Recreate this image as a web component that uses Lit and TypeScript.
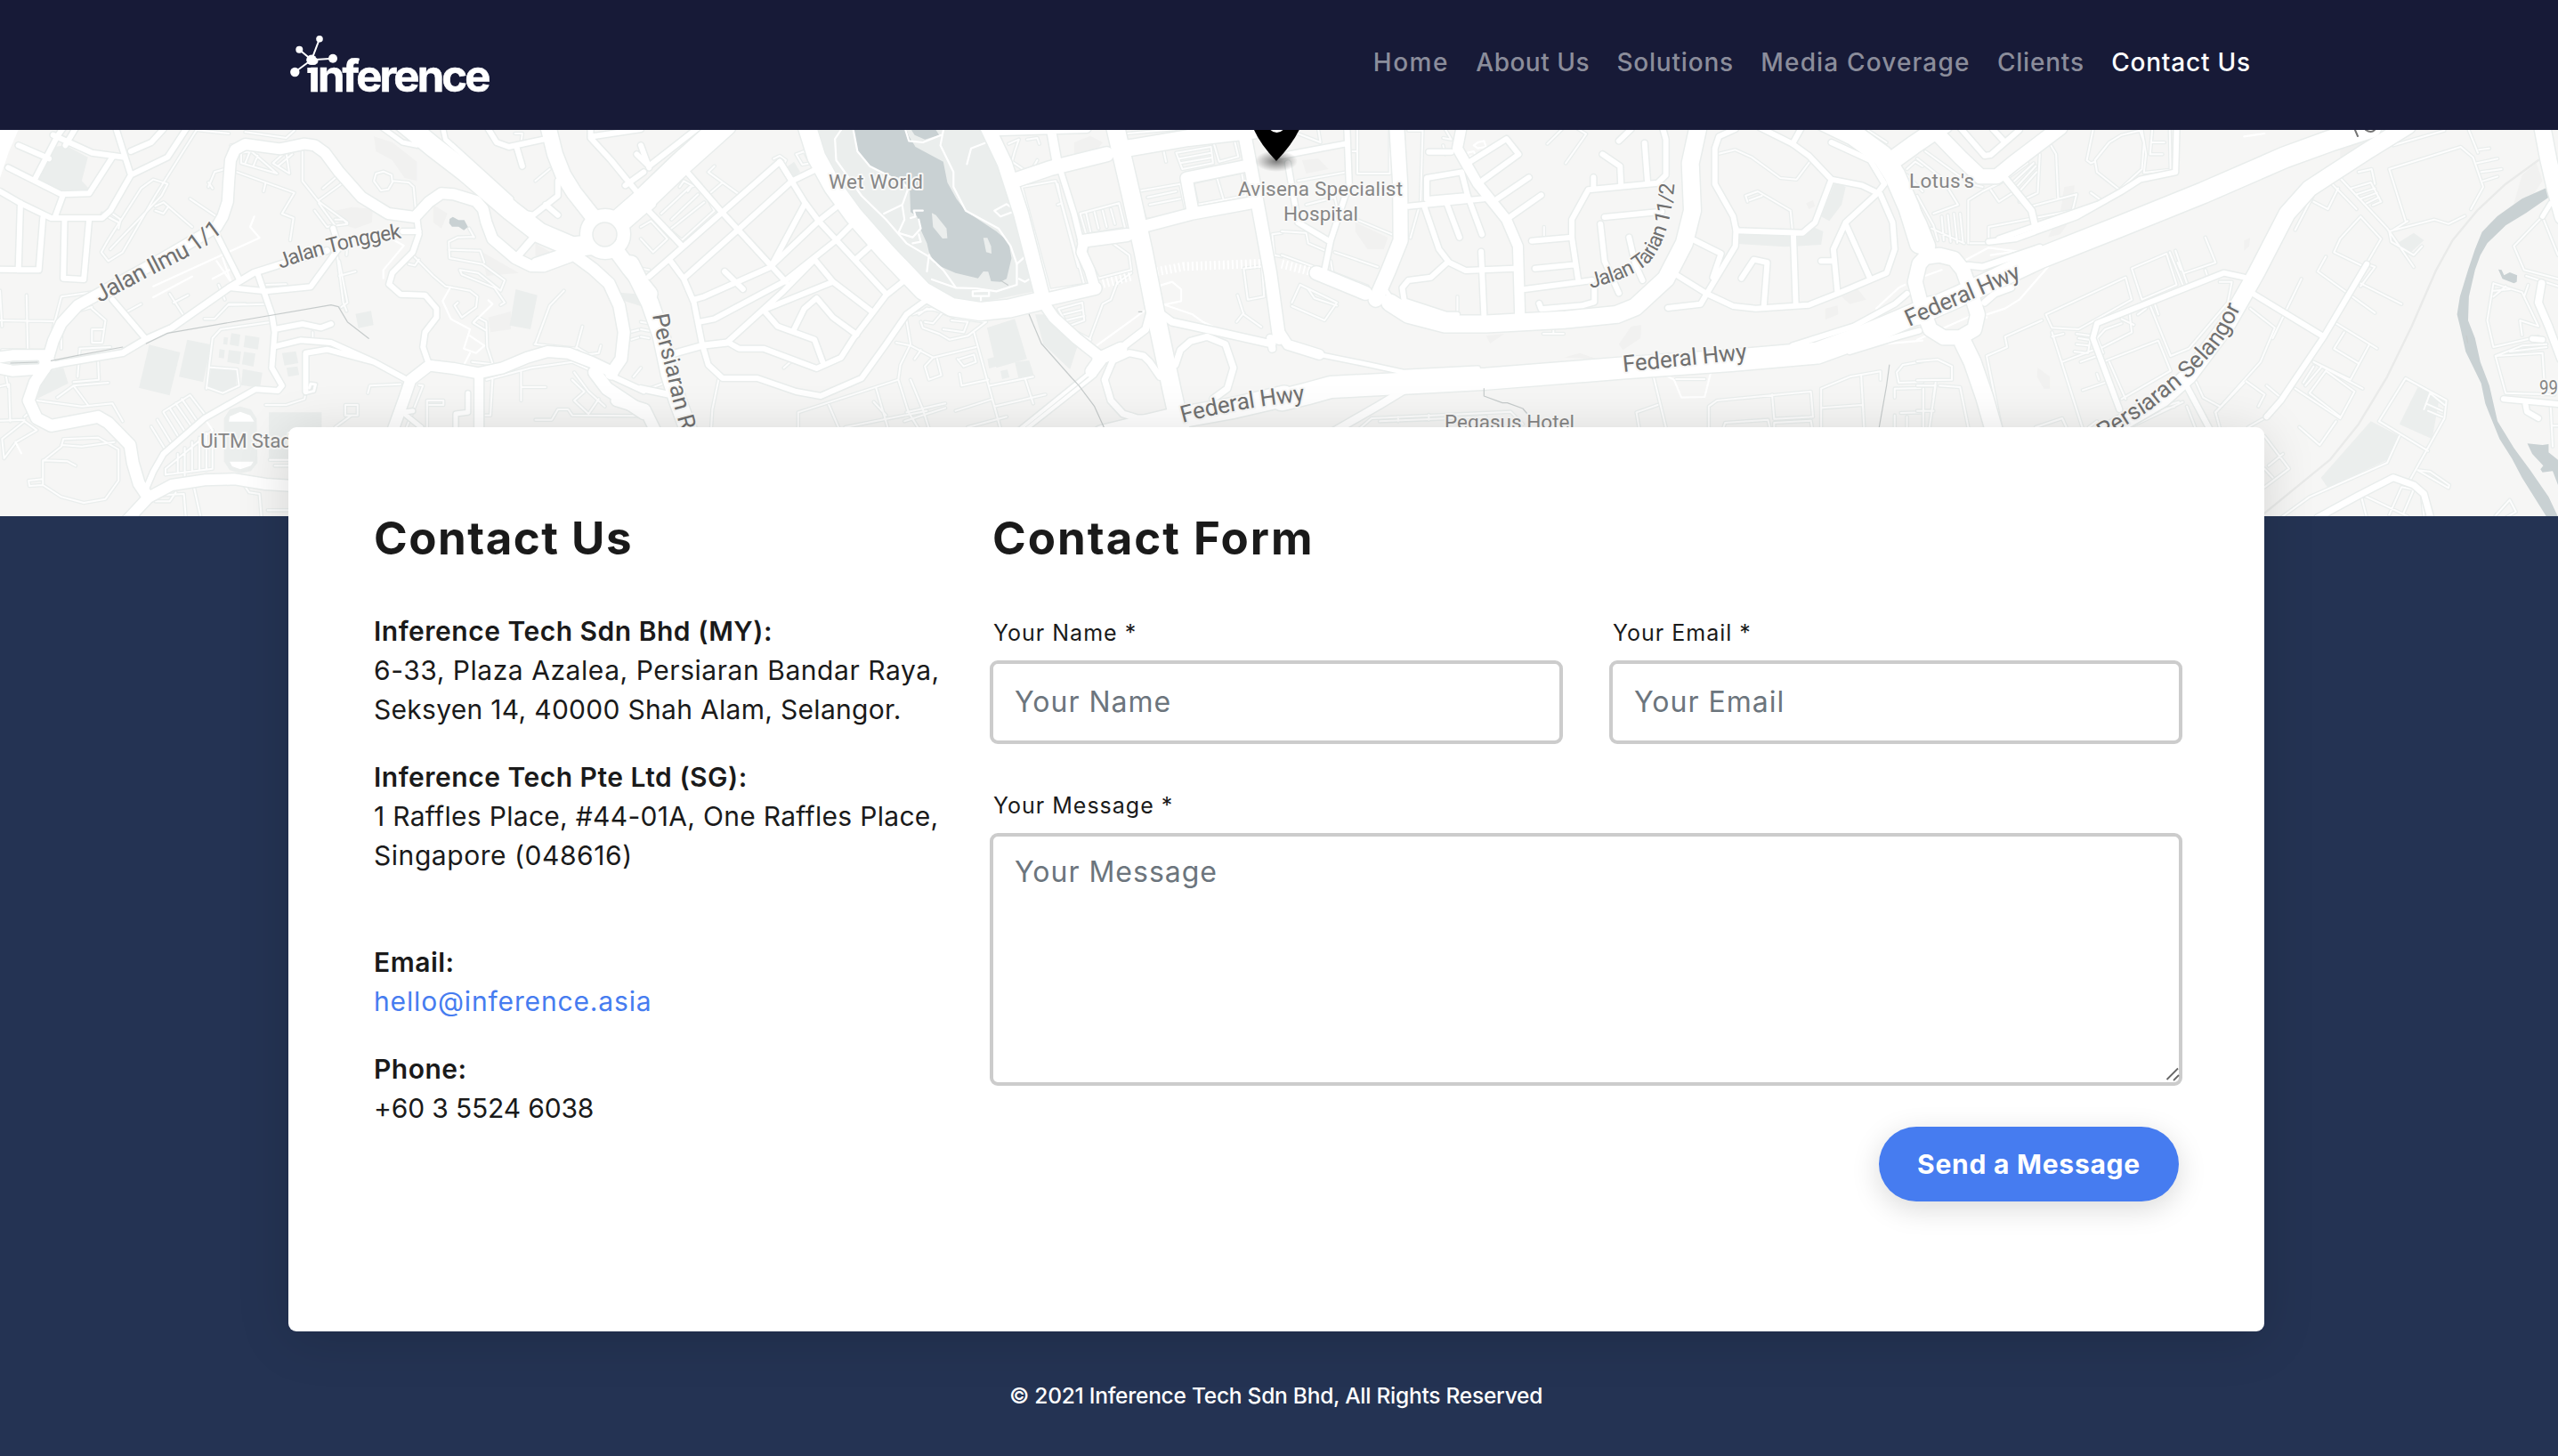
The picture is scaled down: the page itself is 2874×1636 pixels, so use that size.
import { LitElement, html, css, svg } from "lit";
import { customElement } from "lit/decorators.js";

type Road = [number, string];

interface Sheet {
  x: number;
  areas: string[];
  shade: string[];
  water: string[];
  islands: string[];
  lines: string[];
  paths: string[];
  roads: Road[];
  lanes: string[];
}

/* The map is drawn in four sheets, each on its own 1568 x 1350 grid. */
const SHEETS: Sheet[] = [
  {
    x: 0,
    areas: [
      "M130,75 160,70 215,110 200,190 220,220 150,235 90,185Z",
      "M365,742 441,768 415,913 340,887Z",
      "M458,725 517,742 497,868 438,850Z",
      "M1262,555 1315,575 1298,690 1247,677Z",
      "M870,638 908,628 914,676 877,686Z",
      "M658,970 787,970 787,1130 658,1130Z",
      "M90,925 110,835 155,820 167,872Z",
      "M548,990 562,960 588,950 614,960 628,990 630,1140 614,1168 588,1175 562,1165 548,1135Z",
      "M566,703 588,708 584,748 562,742Z",
      "M600,710 635,718 631,758 596,750Z",
      "M560,760 590,765 586,808 556,800Z",
      "M597,766 625,772 620,816 592,808Z",
      "M594,824 642,836 636,888 590,878Z",
      "M517,818 578,828 578,885 545,900 508,885Z",
      "M548,716 558,718 556,742 546,740Z",
      "M537,757 550,760 548,788 535,785Z",
      "M690,770 724,764 730,804 696,812Z",
      "M701,820 728,815 732,844 705,850Z",
      "M1516,566 1568,572 1568,612 1518,590Z",
    ],
    shade: [
      "M915,40 960,60 1020,125 1020,190 990,180 960,120 920,90Z",
      "M820,290 860,278 912,284 910,330 870,350 830,335Z",
      "M1180,430 1270,500 1190,510Z",
      "M1060,270 1095,300 1080,350 1060,330Z",
      "M1310,400 1360,440 1310,455Z",
      "M1195,650 1250,630 1250,690 1200,700Z",
    ],
    water: ["M1100,318 1108,311 1122,322 1136,322 1145,345 1135,356 1122,344 1106,344 1099,332Z"],
    islands: [
      "M0,18 45,18 22,90 0,180Z",
      "M560,1001 562,984 588,968 612,980 622,1001Z",
      "M562,1136 620,1136 614,1150 588,1162 568,1152Z",
    ],
    lines: ["M125,796 190,778 300,750", "M358,738 410,703 810,608 828,614 850,665 902,721"],
    paths: [
      "M375,582 470,512M375,545 635,382 612,345 622,310",
      "M965,390 988,408 938,490 938,518",
      "M530,460 570,540M545,450 565,530M520,520 575,480",
      "M1102,548 1083,595 1103,655 1150,690 1135,755 1165,770 1185,745 1150,712M1150,770 1135,810M1160,665 1205,605 1195,592",
      "M38,1070 52,1108",
      "M500,990 520,1030",
    ],
    roads: [
      [13, "M120,800 105,830 85,870 70,930 90,990 125,1015 240,985 265,1005 318,1080 325,1140 340,1210 362,1255"],
      [12, "M310,1335 362,1258 420,1215 500,1198 575,1195 650,1212 720,1218"],
      [12, "M115,800 130,730 150,670 190,610 240,572 400,450 530,345 545,310 557,260 560,190 564,120 575,85 600,66 685,82 745,65 770,70 795,95 830,160 885,245 950,300 1015,312 1050,260 1080,232 1110,235 1165,258 1182,285 1190,330 1205,385 1260,450 1300,477 1330,478 1395,445"],
      [12, "M-5,785 30,778 110,778"],
      [12, "M-5,820 30,830 110,822"],
      [9, "M100,778 100,825"],
      [22, "M985,-10 1060,75 1140,160 1250,290 1320,365 1400,412 1450,405"],
      [5, "M935,10 985,60 1020,70M1085,20 1090,50 1250,250"],
      [17, "M1340,0 1358,100 1378,170 1405,230 1445,300 1465,330"],
      [13, "M1395,430 1450,485 1490,535 1515,610 1527,700 1520,790 1495,840"],
      [17, "M1505,420 1540,485 1590,570"],
      [24, "M1500,340 1568,265"],
      [8, "M1262,450 1303,385M1310,462 1375,432"],
      [12, "M960,1035 990,920 1005,860 1050,812 1110,822 1170,838 1230,820 1290,785 1340,765 1390,770 1450,802 1500,835"],
      [10, "M1172,838 1172,1025"],
      [14, "M1455,835 1485,890 1575,972"],
      [6, "M1500,850 1575,898"],
      [6, "M1050,810 1035,750 1040,700 1068,650 1068,620 1040,575 980,572 952,538 960,500 1010,430 1025,370 1020,315M985,360 1025,360"],
      [6, "M0,225 50,265 125,315 250,315 270,290 320,170 285,18M320,170 410,110 460,5M320,90 370,60 400,15"],
      [6, "M45,70 120,115M20,145 85,190 150,235 218,232 275,110M85,185 140,40 155,10M130,35 225,95 305,110M190,0 160,70"],
      [6, "M155,235 135,310M50,265 45,490M105,315 95,490 0,488M158,320 155,518 205,522 218,320"],
      [6, "M275,590 355,720M530,370 585,520M565,550 650,562 760,547 830,415 815,350"],
      [7, "M110,818 150,805 300,770 355,725 420,685 560,550 620,500 700,465 800,425"],
      [6, "M630,500 665,640 672,700 665,820 690,880 680,897 625,892 500,990 400,1110 375,1170 355,1235"],
      [6, "M672,690 740,672 785,685 810,672M672,748 735,727 810,735 915,800 995,860M748,900 748,770 800,758 915,800"],
      [3, "M748,905 768,898 772,876 760,874 757,888"],
      [6, "M1195,15 1215,60 1245,75 1330,50M1265,80 1278,140M1365,190 1365,240 1305,305 1285,300M1335,270 1365,305"],
      [6, "M1445,15 1445,45 1495,120 1560,230M1450,40 1568,15M1530,205 1575,160"],
      [5, "M1115,1020 1115,975 1145,970 1145,905M1010,965 985,970 1030,1020"],
    ],
    lanes: [
      "M480,20 380,240 300,430 265,460 248,430 262,395 345,215 375,185 410,200 395,240 270,420",
      "M380,275 400,262 470,345M380,290 400,300 410,280M465,250 530,310M265,290 295,320 290,350M250,300 290,330",
      "M580,160 720,230 690,300 718,315 710,390M650,195 645,225",
      "M740,80 740,190 780,260 850,330 M780,255 840,195M790,215 820,180M770,290 800,345 820,340 780,265",
      "M510,210 525,160 550,150M510,195 520,215M590,95 615,90 678,165 590,130 590,95M610,95 600,130M630,105 620,140M668,130 700,90 708,165 668,130M680,140 715,100M565,70 640,60",
      "M915,190 920,165 938,158 958,170 960,195 950,218 932,222 915,190M960,190 1000,195 1012,210 1018,300",
      "M820,320 840,320 850,335 825,340M825,440 840,600 848,628M830,510 870,495M830,460 850,600 835,615M850,400 848,440",
      "M1010,440 1060,510 1090,545 1150,560 1168,580 1165,615 1130,650 1112,610 1120,600M1000,470 1015,475 1025,455",
      "M1160,378 1120,380 1098,395 1100,450 1180,470 1235,525 1225,560 1170,500 1125,490 1130,505 1210,550 1235,600 1225,608M1098,422 1175,425 1185,465M1148,350 1160,380",
      "M1158,668 1170,650 1190,665 1192,750 1205,805M1158,668 1190,695M1155,800 1205,808",
      "M1310,740 1345,610 1380,560M1308,740 1410,755 1425,680M1410,750 1440,775 1465,770 1470,745",
      "M505,890 520,720 540,690 665,665M515,818 580,825 585,880 545,905 505,885M600,605 560,605 525,655 500,655M560,608 650,605M650,540 700,538M415,570 450,645M425,600 460,575M305,635 345,605M535,540 550,590",
      "M0,660 130,663M65,575 68,765M0,560 5,680M5,760 130,762M130,685 150,580 250,560M150,755 150,700M225,620 258,660 250,735 225,735 225,690 255,690M160,640 225,615M195,760 190,850M240,800 242,860 180,868M195,755 270,750",
      "M0,882 22,875 25,1000M0,998 60,995M15,850 20,885M140,920 180,880 265,870M180,880 215,945M60,985 80,960M90,930 200,950 275,940 300,1000M5,1060 60,1000 90,1030 40,1070 10,1125 5,1060",
      "M370,1018 402,1090M385,995 420,1075M400,970 440,1060M415,955 455,1040M430,940 470,1020M445,925 485,1005M400,968 465,912 500,975",
      "M405,1160 520,1030 520,1160 405,1180 405,1160M435,1110 435,1175M452,1090 452,1195M470,1070 470,1170M488,1055 488,1165M505,1040 505,1165",
      "M105,1135 150,1085 155,1060 240,1055 290,1095 290,1200 258,1262 205,1275 150,1255 105,1215 105,1135 M105,1132 165,1135 185,1150M150,1080 200,1085 280,1070M105,1195 70,1200 72,1218 105,1215",
      "M345,1295 380,1250 450,1245 455,1330M380,1270 415,1270 430,1240M475,1225 492,1330M600,1220 610,1240 635,1245 640,1330M655,1300 710,1300M660,1130 710,1130M672,1150 710,1150",
      "M820,1020 860,980M845,945 875,945 875,980 845,980 845,945M650,945 700,945 745,925 748,905",
      "M995,1020 1035,880 1025,878M1045,1020 1045,930 1085,930 1085,945 1050,945M900,905 905,880 980,875M765,700 765,725",
      "M1275,830 1275,930M1275,885 1335,885M1190,860 1300,820 1400,800 1440,825M1205,860 1200,980 1185,980",
      "M1310,995 1350,995 1365,960 1390,960 1400,980 1568,982M1405,835 1440,900 1480,950M1400,860 1430,900 1405,930 1440,975 1465,925",
      "M1260,30 1278,30 1275,60M1310,190 1345,150M1540,700 1568,690M1545,725 1568,715M1550,850 1568,820M600,25 700,45 720,20M480,18 560,30",
    ],
  },
  {
    x: 720,
    areas: [
      "M430,18 840,18 900,190 970,560 830,600 760,590 700,530 600,410 480,220Z",
      "M965,640 1000,640 1070,740 1050,825 985,740Z",
      "M847,685 915,655 945,790 870,820Z",
      "M915,800 950,795 962,845 925,860Z",
      "M848,790 865,783 870,815 852,822Z",
      "M880,830 897,826 902,852 884,858Z",
      "M350,150 375,125 390,160 365,185Z",
    ],
    shade: ["M1060,60 1100,38 1130,60 1110,95 1060,105Z"],
    water: [
      "M520,18 650,18 656,40 672,75 740,125 750,195 772,250 795,292 870,360 900,395 907,450 895,520 880,530 857,528 850,496 838,495 825,518 770,500 720,470 705,430 700,400 685,355 676,310 660,295 658,215 635,180 600,170 560,140 530,90Z",
      "M662,18 722,18 730,35 695,50 670,35Z",
    ],
    islands: ["M712,298 722,305 748,350 750,383 738,384 715,345Z", "M838,382 848,382 857,410 858,435 845,430Z"],
    lines: ["M950,640 980,738 1055,855 1072,880 1110,950 1133,1020", "M880,525 898,541", "M1218,631 1226,631"],
    paths: [
      "M490,18 475,48 478,120 540,240 600,320 650,400 705,445 740,490 770,548",
      "M520,18 530,90 560,140 600,168 655,212 640,270 595,300M648,20 656,55 690,60 735,35M740,20 733,70 765,160 765,210 795,290 875,350 905,410 920,470 920,540 870,562 820,552 770,550 712,522",
      "M798,133 808,80 842,62M690,290 668,290 672,310 660,315M640,275 645,320 630,365 665,380 685,350 680,320M665,400 685,395 680,370M700,495 705,440M920,470 940,445 960,450M925,520 940,530 958,515M812,562 852,560 852,578 812,578 812,562M832,578 832,600",
      "M865,290 895,268 918,290 880,310 865,290",
      "M1115,745 1240,620M1265,545 1300,530 1322,555 1322,595 1280,607 1350,640 1375,665 1450,710",
    ],
    roads: [
      [26, "M-90,370 0,262 100,130 205,0"],
      [6, "M-10,100 20,140 150,0M0,70 20,145M18,285 30,270"],
      [19, "M-25,470 22,600 50,710 70,840 90,930 118,1035"],
      [7, "M0,890 70,910M80,772 150,745 212,735"],
      [12, "M-60,930 10,960 35,1030"],
      [20, "M405,0 430,110 470,210 520,305 600,430 690,560 760,615 830,630 900,620 985,592"],
      [14, "M985,592 1112,552"],
      [11, "M1112,555 1098,490 1078,430 1084,392"],
      [14, "M1084,392 1190,372"],
      [16, "M845,0 890,130 930,300 985,592"],
      [12, "M985,600 1010,650 1065,720 1125,785"],
      [8, "M1125,785 1180,748 1235,690 1245,640"],
      [14, "M1128,785 1103,832M1120,790 1175,755"],
      [4, "M1095,840 920,1035M1110,845 1050,910 935,1035"],
      [20, "M1158,-10 1200,240 1230,430 1260,640 1300,900 1322,1035"],
      [16, "M910,190 1000,148 1140,100"],
      [18, "M1190,80 1340,45 1500,20"],
      [10, "M865,22 1090,12M1003,10 1020,140"],
      [6, "M1028,160 1060,300M1060,300 1078,400"],
      [13, "M1225,345 1350,300 1500,262M1350,290 1335,180 1485,138"],
      [14, "M1472,-5 1500,200 1540,500 1562,720"],
      [8, "M1275,640 1300,665 1400,695 1545,740M1540,720 1545,755"],
      [7, "M1270,850 1245,800 1230,780 1195,770 1155,795 1135,860 1150,930 1180,975 1215,990 1280,990M1308,810 1320,760 1345,730 1385,715 1430,740 1450,820 1435,890 1400,925"],
      [23, "M1130,1048 1300,992 1450,955 1575,915"],
      [6, "M20,512 70,452 340,125 370,190 430,150M70,455 105,520 130,600 150,740 165,810 200,855 285,855 380,900 440,915 540,855 600,740 650,640 700,590"],
      [6, "M15,285 100,408M105,518 240,352 370,190M130,590 155,580 318,480 402,265M145,665 180,655 350,530 478,390 525,325M318,478 435,325 490,265M212,733 350,560 425,455"],
      [6, "M110,155 195,290 275,410 355,530M340,125 400,260 435,325 600,570M425,455 470,530 565,630M205,495 250,555M525,455 570,400M470,530 300,625"],
      [6, "M300,625 335,680 425,725 445,800M375,690 400,620 430,585 470,650 528,708"],
      [6, "M212,733 240,755 300,755 430,822 490,785 520,720 570,630 600,575 650,520"],
    ],
    lanes: [
      "M50,300 120,210 145,200 180,290 100,390 70,355 155,262M75,320 140,235M95,210 105,190 125,205 115,225M180,140 165,160 240,235M170,230 200,195M325,115 340,105 355,120 345,145M380,100 400,90 415,130 395,135 380,100M0,345 25,325 65,385 30,430 0,385",
      "M190,860 175,960 172,1025M385,1025 385,970 630,860 635,810 660,740 650,660M460,945 485,1025M575,885 605,1025M630,860 655,970 680,1025M660,860 690,960 705,1025M570,935 600,980M650,970 745,940M645,1000 745,955M500,1020 700,965",
      "M625,735 660,745 715,785 820,750M685,760 670,790M715,785 695,815 705,860 735,845 725,790M815,700 880,1025M855,880 960,850M865,950 990,910M940,855 960,940M780,790 815,775 820,800 790,815 775,790M780,840 785,880 850,860M770,965 860,925M800,1020 895,985M350,820 370,795",
      "M665,640 710,620 770,650 845,665 800,712 755,725 730,705 690,685 685,665M680,640 700,620 740,630 715,670 695,665M760,660 800,665 790,700 740,690",
      "M1095,735 1130,605 1150,590 1165,535 1200,500M932,210 1015,190 1085,540 1000,558 932,210M1020,200 1030,270 1070,480",
      "M1075,300 1170,265 1185,350 1090,372 1075,300M1090,300 1100,360M1110,295 1120,350M1130,290 1140,345M1150,285 1160,335M1215,225 1320,200 1335,300 1235,322 1215,225M1240,245 1310,225M1245,270 1320,250",
      "M1350,195 1470,160 1480,240 1362,270 1350,195M1410,180 1425,250M1310,95 1395,75 1400,130 1325,150 1310,95M1318,115 1395,95M1320,130 1395,112M1400,55 1450,40 1462,108 1415,125 1400,55M1190,30 1310,15M1278,80 1285,125",
      "M1092,405 1150,395 1195,440 1200,490 1120,518 1090,440 1092,405M1475,485 1520,478 1525,580 1485,590 1475,485M1460,575 1475,640 1518,682M1475,635 1458,665M1545,370 1568,365M1545,370 1550,440 1568,445",
      "M900,65 925,50 915,90 908,125 940,155 960,145 970,120M945,50 970,45 975,65M1022,622 1080,600 1085,660 1045,680 1022,622M1035,640 1080,625M1040,660 1085,645M1040,680 1100,725M1020,270 1030,265",
      "M0,665 20,670M0,690 20,695M0,715 20,720M20,890 60,870M0,485 20,490",
    ],
  },
  {
    x: 1440,
    areas: [
      "M1355,190 1380,210 1370,270 1340,325 1320,310 1340,240Z",
      "M1112,368 1180,372 1300,345 1325,360 1320,405 1230,412 1115,402Z",
      "M1385,18 1440,18 1430,45Z",
    ],
    shade: [
      "M180,330 260,380 250,420 210,420 180,360Z",
      "M50,120 90,115 115,150 60,165Z",
      "M855,680 880,676 878,720 835,760 825,740Z",
      "M690,785 730,770 770,790Z",
      "M1330,620 1360,610 1362,640 1330,658Z",
      "M500,712 545,705 510,738Z",
      "M1370,580 1410,555 1430,590 1390,605Z",
      "M1283,265 1300,255 1305,275 1290,285Z",
    ],
    water: [],
    islands: [],
    lines: ["M495,890 495,915 540,938 552,938 590,957 601,975", "M1487,810 1480,880 1462,1020"],
    paths: [
      "M455,95 470,90 475,105 455,108 455,95M480,60 495,55 500,75 480,80 470,70 480,60",
      "M1455,620 1510,550 1525,540M1405,665 1460,635 1530,580",
      "M1470,740 1568,728",
      "M940,845 960,860 978,920 1035,918 1050,835",
    ],
    roads: [
      [16, "M281,-5 290,200 291,390 262,490 230,590"],
      [15, "M85,500 205,568"],
      [19, "M265,600 310,640 400,672 500,672 690,658 820,640 865,615 940,520 985,400 1005,290 1000,130 1022,-10"],
      [5, "M255,560 270,590 400,640M365,640 430,640"],
      [11, "M440,10 430,80 480,200 550,320 578,410 583,645"],
      [6, "M360,92 415,92M455,130 550,48 580,100 488,192M528,250 605,178M558,312 635,238M355,250 355,180 440,160 455,240 355,252M310,275 495,250M488,428 495,640"],
      [6, "M350,280 385,420 410,465 450,492 570,485M405,465 365,515 310,525 295,550 300,595 400,640M405,270 435,380M455,240 490,370"],
      [6, "M595,555 760,525M725,520 710,380 710,320 750,220 920,197 940,170 940,50 930,0M612,392 710,380M620,485 720,472M763,178 763,212"],
      [6, "M785,100 828,140 830,200M888,62 895,190M790,312 930,293M780,335 790,460 825,568M850,380 865,470 883,525M765,550 765,598 735,610 635,622 630,603"],
      [6, "M945,618 1025,605 1040,570 1110,410 1112,350M1010,390 1075,435 1055,515M970,510 1040,570 1105,612 1160,620 1290,608 1360,570 1480,500 1500,420 1495,330 1465,235 1420,205 1345,185 1290,105 1250,65 1170,10"],
      [6, "M1110,15 1070,40 1060,80 1060,200 1105,310 1112,358 1275,365 1305,330 1345,185M1252,370 1258,608M1125,518 1155,455 1188,465 1180,608M1475,200 1455,235 1380,330 1350,420 1360,568M1380,335 1440,520M1320,460 1350,460M1250,65 1270,15M825,55 855,15M1475,200 1440,120 1345,60"],
      [6, "M0,105 155,65M160,20 165,200 120,390 105,490M15,130 40,330 115,392"],
      [11, "M-5,700 15,742 92,775"],
      [5, "M92,775 210,808 300,835 480,822"],
      [24, "M0,928 60,908 120,885 300,872 500,857 840,820 1100,795 1310,770 1400,725 1480,680 1590,615"],
      [8, "M120,1040 240,945 300,895 400,885"],
      [6, "M1250,745 1400,680 1500,605 1530,570M1390,765 1500,718 1560,695"],
      [23, "M1325,-15 1400,35 1470,105 1500,170 1535,280 1562,400"],
      [20, "M1490,125 1545,70 1620,0"],
    ],
    lanes: [
      "M650,65 690,10M720,10 745,32 695,130M1065,100 1110,85 1150,110 1220,180 1260,185 1295,120M1140,260 1135,240 1165,225 1245,290 1250,360M1145,255 1175,240M185,20 185,165 265,165 265,20M310,20 345,20 340,260 315,382M430,580 430,640M170,90 185,90",
      "M640,705 690,705M665,690 665,705M642,345 642,385M25,600 45,540 135,600 105,660 25,612M65,555 80,585 135,610M130,430 235,480M40,190 160,160M165,310 270,370M60,270 130,245 140,310M20,20 95,60 90,20M0,440 80,480M0,360 60,365 65,400 115,430M120,460 125,500 210,545",
      "M910,850 940,1020M875,1025 868,970 920,945M965,858 1035,858M1045,1025 1045,950 1065,930 1295,900 1300,985 1205,992 1200,910M1080,1025 1085,1005 1190,995 1195,1025M1205,1025 1205,1005 1295,998 1298,1025",
      "M1320,1025 1320,890 1390,850 1465,832 1465,860M1418,845 1425,1020M1322,955 1420,945M1568,798 1520,810 1505,835 1510,870 1568,868M1568,888 1500,890 1500,920M1515,972 1568,970M1500,980 1500,1020M1530,985 1530,1020",
      "M190,1025 220,990 560,968 590,1010M285,985 285,1000M360,978 360,995M240,1000 500,985M400,15 415,50 395,45M1435,20 1480,60M1530,150 1550,125 1568,140M1530,170 1568,225M400,100 395,70",
    ],
  },
  {
    x: 2154,
    areas: [
      "M1175,400 1215,365 1240,390 1200,440Z",
      "M1225,885 1278,920 1260,1060 1180,1010Z",
      "M1110,1000 1180,1050 1150,1130 1005,1225 988,1190Z",
    ],
    shade: [
      "M360,210 385,205 380,310 350,370 320,380 350,300Z",
      "M1035,70 1110,50 1080,140 1035,180Z",
      "M295,820 325,850 325,890 310,890 293,850Z",
      "M1480,170 1515,130 1530,190 1480,290 1455,290Z",
      "M800,390 815,382 812,410 800,425Z",
    ],
    water: [
      "M1540,213 1480,250 1420,308 1382,362 1365,420 1348,490 1328,580 1321,640 1330,690 1342,765 1380,872 1390,940 1425,1060 1455,1125 1480,1190 1540,1322 1568,1322 1545,1255 1500,1165 1460,1090 1420,1000 1400,880 1378,800 1365,720 1348,660 1350,580 1365,490 1378,440 1395,400 1440,340 1490,298 1545,245Z",
      "M1493,1075 1530,1080 1545,1077 1545,1105 1568,1130 1568,1215 1555,1168 1530,1172 1525,1162 1532,1150 1505,1110Z",
      "M1422,488 1430,490 1436,508 1450,498 1468,508 1467,530 1460,535 1432,520Z",
    ],
    islands: [],
    lines: ["M1344,712 1347,735"],
    paths: [
      "M120,455 175,415 260,430 300,420M0,520 60,490M230,430 180,440M320,480 250,590 215,620 170,640M0,725 140,640 170,650",
      "M800,40 850,30",
    ],
    roads: [
      [23, "M0,640 100,580 200,515 300,450 480,352 700,230 900,110 1010,55 1110,10"],
      [16, "M5,470 20,447 55,440 90,452 112,490 130,560 148,640 140,690 105,718 65,718 32,690 10,610 -5,530 5,470Z"],
      [22, "M-18,290 0,340 20,410"],
      [19, "M112,735 135,800 165,920 190,1040"],
      [16, "M35,10 105,110 155,175 195,175 235,130 350,10"],
      [16, "M35,30 -40,100"],
      [7, "M215,180 280,290 290,350M125,475 160,480 300,415M165,600 190,570 230,550"],
      [6, "M175,395 240,385 390,310 500,225 545,185 632,160 635,10M105,10 165,105 180,102 250,18M185,15 215,60"],
      [6, "M200,385 440,270"],
      [18, "M425,1065 600,925 665,845 760,670 830,500 905,300 960,215 1010,170 1100,90 1200,5"],
      [6, "M800,515 750,500 440,670 430,720 495,960M822,570 995,715M1100,470 995,715 890,930 855,985M655,870 715,1025"],
      [18, "M1527,-10 1545,120 1562,220 1580,310"],
      [5, "M1530,310 1550,265"],
      [8, "M1528,535 1520,600 1545,680 1575,790"],
      [6, "M1435,925 1568,942M1488,940 1492,968 1520,990M1505,722 1530,725"],
      [7, "M980,1325 1080,1250 1165,1190 1215,1215 1240,1245 1257,1330"],
    ],
    lanes: [
      "M440,160 435,120 470,60 500,35 545,20 555,60 550,150 495,220 440,160M425,130 415,120 430,20M425,130 435,125M345,250 340,100 325,65M300,100 295,230 250,260M0,115 60,180 100,270 40,300M0,240 40,340 50,390M20,90 130,200 160,210M125,400 125,255 160,225 205,195M130,400 175,400 175,345 380,290 390,235 280,275",
      "M60,310 65,390M75,305 82,395M90,300 98,398M105,300 112,395M35,350 115,400M230,200 285,130M240,215 290,140M250,225 292,160M225,175 270,130M180,220 200,260 240,225M425,230 455,260",
      "M575,20 570,100 600,100M575,60 605,60M555,160 560,100 550,20M555,162 620,152 618,20",
      "M315,640 510,515 525,590 395,690 330,685 315,640M525,485 610,435 635,540 550,590 525,485M618,430 650,540M632,425 660,535M637,465 645,490M705,380 730,465 655,500M705,490 710,510M570,610 620,780 665,755 760,600 770,530 740,530M520,640 525,700 440,760M500,655 530,675M540,640 560,620",
      "M455,800 590,728 620,830 500,925M470,800 510,925M330,700 405,1025M305,660 215,715 220,750 170,780 205,1020M355,800 450,750M330,715 358,705M390,705 425,712 418,770 385,765M395,720 420,725M390,740 420,745M400,800 440,780M405,895 470,865M440,840 445,860M580,600 590,640M290,1020 355,990 365,1020M455,770 440,720 460,690 500,670",
      "M620,920 560,990M650,935 520,1020M660,950 680,1020M600,950 640,935M590,965 630,950M420,1020 440,1000M815,620 875,685 840,800 730,970 740,1020M940,520 870,720M1000,445 980,495 1120,635M1085,310 1135,385 1095,480 1020,430 1035,385 1085,310M1085,535 1185,605M1120,480 1085,545 1120,480 1100,470",
      "M1025,670 1125,755M1105,745 1060,860 970,800M1080,805 1020,755 1045,700M1000,830 1070,900 1035,990 925,890M1000,830 960,905 1035,985M1025,1000 985,1080 935,1020M970,800 1090,890M990,815 950,880M970,815 945,870M800,870 730,970M805,865 850,910 835,950M855,880 890,920M680,860 700,920 740,950M855,985 810,1020",
      "M1035,180 1150,350 1215,480M1155,150 1195,325M1165,355 1200,325M1155,150 1330,75 1360,110 1385,210 1355,285M1155,360 1265,320 1300,335 1340,308M1155,360 1160,395 1215,440 1235,410M1370,130 1420,115M1380,160 1430,150M1385,190 1420,175M1350,20 1372,95M1375,85 1400,80M1165,70 1290,20",
      "M1062,215 1110,195 1135,260 1115,272M1075,235 1120,215M1085,250 1125,230M1100,265 1130,245M1080,160 1112,150 1120,200M1015,200 1075,285M970,260 1005,285 1030,215M925,355 970,235",
      "M1130,1000 1195,855 1295,930 1290,990 1205,1200M1130,1000 1250,1100M1240,960 1255,905 1290,945M1245,940 1285,965M1250,965 1285,985M1180,1050 1150,1140 960,1255 890,1325M1085,1245 1200,1320M1085,1245 1100,1325M1215,1230 1185,1222 1155,1315M1215,1230 1190,1310M1225,1165 1255,1170 1302,1215 1300,1225 1225,1165",
      "M850,1050 910,1160 850,1222M860,1150 895,1110M870,1190 850,1160M1530,310 1460,410 1485,490 1568,520M1530,310 1568,440M1490,510 1568,545M1410,535 1395,660 1410,750 1520,715M1410,535 1480,565 1520,680 1475,660 1480,710M1410,580 1440,545M1410,560 1450,555M1495,540 1485,580",
      "M1415,780 1440,905 1560,910M1415,780 1530,770 1535,880M1415,780 1480,745 1540,740M1450,765 1540,750M1550,950 1555,1085M1555,1015 1568,1015M1415,1318 1450,1265 1465,1305 1440,1325M1235,1250 1240,1320",
      "M0,798 50,792 85,815 85,860 0,862M0,880 45,880 30,1020M55,880 105,885 125,1020M0,965 40,965M45,870 40,920M15,890 15,1020",
    ],
  },
];

@customElement("city-map")
export class CityMap extends LitElement {
  static styles = css`
    :host {
      display: block;
      height: 434px;
      overflow: hidden;
      background: #f6f6f5;
    }
    svg {
      display: block;
    }
    path,
    .ring {
      fill: none;
      stroke-linejoin: round;
      stroke-linecap: round;
      vector-effect: non-scaling-stroke;
    }
    .area {
      fill: #ebeeed;
    }
    .shade {
      fill: #f1f1f0;
    }
    .water {
      fill: #c9d1d3;
    }
    .bright {
      fill: #fff;
    }
    .grass {
      fill: #ebeeed;
    }
    .plot {
      fill: #f6f6f5;
      stroke: #e9edec;
      stroke-width: 1.5px;
    }
    .lane-case {
      stroke: #eaeeed;
      stroke-width: 4.6px;
    }
    .lane {
      stroke: #fdfdfd;
      stroke-width: 2px;
    }
    .footway {
      stroke: #fff;
      stroke-width: 2.2px;
    }
    .casing {
      stroke: #e9edec;
    }
    .road {
      stroke: #fff;
    }
    .rail {
      stroke: #c6cbcb;
      stroke-width: 1.2px;
    }
    .track {
      stroke: #e9eae9;
      stroke-width: 2.4px;
    }
    .ties {
      stroke: #fff;
      stroke-width: 10px;
      stroke-linecap: butt;
      stroke-dasharray: 2 3;
    }
    .pin {
      fill: #000;
    }
    .halo {
      stroke: #f8f8f7;
      stroke-width: 4px;
      paint-order: stroke;
      stroke-linejoin: round;
    }
    text {
      font-family: "Roboto", "Liberation Sans", sans-serif;
    }
    .poi {
      fill: #868686;
      font-size: 22.5px;
    }
    .street {
      fill: #707070;
      font-size: 26px;
    }
    .street.small {
      font-size: 23.5px;
    }
  `;

  private place(x: number) {
    return `translate(${x} -6) scale(${720 / 1568} ${1 / 3})`;
  }

  render() {
    return html`
      <svg width="2874" height="434" viewBox="0 0 2874 434">
        <defs>
          <path id="ilmu" d="M112,194 L163,167 L216,140 L262,106" />
          <path id="tonggek" d="M315,156 L340,147 L364,140 L404,130 L470,118" />
          <path id="raja" d="M733,208 L737,229 L743,251 L749,273 L757,309 L775,375" />
          <path id="fed1" d="M1329,329 Q1390,312 1480,303" />
          <path id="fed2" d="M1824,272 L1980,256" />
          <path id="fed3" d="M2145,221 L2183,204 L2221,188 L2290,158" />
          <path id="tarian" d="M1787,178 Q1834,166 1852,150 Q1883,116 1883,20" />
          <path id="selangor" d="M2363,348 L2414,316 L2455,283 Q2494,245 2503,228 L2533,170" />
          <radialGradient id="pinshade">
            <stop offset="0" stop-color="#000" stop-opacity=".5" />
            <stop offset="1" stop-color="#000" stop-opacity="0" />
          </radialGradient>
        </defs>

        ${SHEETS.map(
          (s) => svg`<g transform=${this.place(s.x)}>
            ${s.shade.map((d) => svg`<path class="shade" d=${d} />`)}
            ${s.areas.map((d) => svg`<path class="area" d=${d} />`)}
            ${s.lanes.map((d) => svg`<path class="lane-case" d=${d} />`)}
            ${s.lanes.map((d) => svg`<path class="lane" d=${d} />`)}
            ${s.water.map((d) => svg`<path class="water" d=${d} />`)}
          </g>`,
        )}
        <g transform=${this.place(2154)}>
          <path class="track" d="M1520,120 1440,200 1370,290 1310,390 1270,490 1210,680 1150,850 1080,1010 1010,1130 850,1310" />
        </g>
        <g transform=${this.place(720)}>
          <path class="ties" d="M1120,540 1200,512M1262,496 1330,478 1520,468" />
          <path class="ties" d="M1568,470 1640,495M1770,575 1850,625" />
        </g>
        ${SHEETS.map(
          (s) => svg`<g transform=${this.place(s.x)}>
            ${s.paths.map((d) => svg`<path class="footway" d=${d} />`)}
            ${s.roads.map(([w, d]) => svg`<path class="casing" stroke-width=${w + 3} d=${d} />`)}
          </g>`,
        )}
        <circle class="ring casing" cx="680" cy="117" r="21" stroke-width="17" />
        ${SHEETS.map(
          (s) => svg`<g transform=${this.place(s.x)}>
            ${s.roads.map(([w, d]) => svg`<path class="road" stroke-width=${w} d=${d} />`)}
            ${s.islands.map((d) => svg`<path class=${s.x === 720 ? "grass" : "bright"} d=${d} />`)}
            ${s.lines.map((d) => svg`<path class="rail" d=${d} />`)}
          </g>`,
        )}
        <circle class="ring road" cx="680" cy="117" r="21" stroke-width="14" />
        <circle class="plot" cx="679.500" cy="117.500" r="13.500" />
        <path class="casing" d="M14,262 L42,261" stroke-width="5" />
        <path class="rail" d="M12,262 L42,261" />

        <g class="halo">
          <text class="poi" x="931" y="66" textLength="106">Wet World</text>
          <text class="poi" x="1391" y="74" textLength="185">Avisena Specialist</text>
          <text class="poi" x="1442" y="102" textLength="84">Hospital</text>
          <text class="poi" x="2145" y="65" textLength="73">Lotus's</text>
          <text class="poi" x="1623" y="336" textLength="146">Pegasus Hotel</text>
          <text class="poi" x="225" y="357" textLength="140">UiTM Stadium</text>
          <text class="poi" x="2853" y="297" textLength="21" lengthAdjust="spacingAndGlyphs">99</text>
          <text class="street"><textPath href="#ilmu" textLength="160">Jalan Ilmu 1/1</textPath></text>
          <text class="street small"><textPath href="#tonggek" textLength="141">Jalan Tonggek</textPath></text>
          <text class="street"><textPath href="#raja" textLength="134">Persiaran R</textPath></text>
          <text class="street"><textPath href="#fed1" textLength="140">Federal Hwy</textPath></text>
          <text class="street"><textPath href="#fed2" textLength="140">Federal Hwy</textPath></text>
          <text class="street"><textPath href="#fed3" textLength="138">Federal Hwy</textPath></text>
          <text class="street small"><textPath href="#tarian" textLength="167">Jalan Tarian 11/2</textPath></text>
          <text class="street"><textPath href="#selangor" textLength="218">Persiaran Selangor</textPath></text>
        </g>
        <path d="M2646,0 L2649,7 M2658,0 Q2664,4 2668,0" stroke="#757575" stroke-width="2" />

        <ellipse cx="1434" cy="35" rx="24" ry="12" fill="url(#pinshade)" />
        <path class="pin" d="M1406,-8 Q1412,12 1434,35 Q1456,12 1463,-8Z" />
        <circle cx="1434.500" cy="-7" r="10" fill="#fff" />
      </svg>
    `;
  }
}

@customElement("app-root")
export class AppRoot extends LitElement {
  static styles = css`
    :host {
      display: block;
      min-height: 1636px;
      background: #243353;
      color: #1a1a1a;
      font-family: "Inter", "Liberation Sans", sans-serif;
    }
    * {
      box-sizing: border-box;
    }
    header {
      display: flex;
      justify-content: space-between;
      align-items: flex-start;
      height: 146px;
      padding: 0 345px 0 324px;
      background: #171a37;
    }
    .logo {
      display: block;
      margin-top: 36px;
    }
    .logo text {
      font-size: 49px;
      font-weight: 700;
      stroke: #fff;
      stroke-width: 0.6px;
    }
    nav {
      display: flex;
      gap: 30.4px;
      margin-top: 49px;
      font-size: 28px;
      line-height: 42px;
      font-weight: 500;
      letter-spacing: 0.8px;
      color: #8b8d9b;
    }
    nav .home {
      letter-spacing: 1.5px;
    }
    nav .about {
      letter-spacing: 0.5px;
    }
    nav .media {
      letter-spacing: 1.15px;
    }
    nav .active {
      color: #fff;
    }
    .card {
      position: relative;
      display: grid;
      grid-template-columns: 692px 1fr;
      width: 2220px;
      height: 1016px;
      margin: -100px 0 0 324px;
      padding: 93px 92px 0 96px;
      background: #fff;
      border-radius: 9px;
      box-shadow: 0 8px 60px rgba(0, 0, 0, 0.14);
    }
    h1 {
      margin: 0;
      font-size: 51px;
      line-height: 64px;
      font-weight: 700;
      letter-spacing: 1.5px;
    }
    .form h1 {
      letter-spacing: 2px;
    }
    .info {
      font-size: 30px;
      line-height: 44px;
      white-space: nowrap;
    }
    .info p {
      margin: 0 0 32px;
    }
    .info h1 + p {
      margin-top: 50px;
    }
    .info p.gap {
      margin-bottom: 76px;
    }
    .info b {
      font-weight: 600;
      letter-spacing: 0.5px;
    }
    .wide {
      letter-spacing: 0.55px;
    }
    .normal {
      letter-spacing: 0.3px;
    }
    .tight {
      letter-spacing: -0.15px;
    }
    .mail {
      color: #467cf0;
      letter-spacing: 0.85px;
    }
    .fields {
      display: grid;
      grid-template-columns: 644px 644px;
      column-gap: 52px;
      margin-top: 54px;
    }
    .form h1,
    label {
      padding-left: 3px;
    }
    label {
      display: block;
      font-size: 25px;
      line-height: 40px;
      margin-bottom: 11px;
      padding-left: 4px;
      letter-spacing: 1px;
    }
    .message {
      margin-top: 49px;
    }
    input,
    textarea {
      display: block;
      width: 100%;
      height: 94px;
      padding: 0 24px 2px;
      border: 4px solid #ccc;
      border-radius: 9px;
      outline: none;
      background: #fff;
      font: 400 32px/48px "Inter", "Liberation Sans", sans-serif;
      letter-spacing: 1px;
    }
    ::placeholder {
      color: #6c757d;
      opacity: 1;
    }
    textarea {
      height: 284px;
      padding-top: 16px;
      resize: none;
    }
    .area {
      position: relative;
    }
    .grip {
      position: absolute;
      right: 3px;
      bottom: 5px;
    }
    button {
      display: block;
      width: 337px;
      height: 84px;
      margin: 46px 4px 0 auto;
      padding: 0;
      border: 0;
      border-radius: 42px;
      background: #467cf0;
      color: #fff;
      font: 700 30px/42px "Inter", "Liberation Sans", sans-serif;
      letter-spacing: 0.75px;
      box-shadow: 0 8px 32px rgba(0, 0, 0, 0.15);
    }
    footer {
      margin-top: 51px;
      padding-right: 7px;
      text-align: center;
      color: #fff;
      font-size: 24.5px;
      line-height: 42px;
      font-weight: 500;
      letter-spacing: -0.25px;
    }
  `;

  render() {
    return html`
      <header>
        <svg class="logo" width="230" height="80" viewBox="324 36 230 80" fill="#fff">
          <g stroke="#fff" stroke-width="2">
            <path d="M350,67.300 L359,43.700 M350,67.300 L336.300,55.700 M350,67.300 L374,65.700 M350,67.300 L331.300,81" />
          </g>
          <circle cx="359" cy="43.700" r="3.800" />
          <circle cx="336.300" cy="55.700" r="4" />
          <circle cx="374" cy="65.700" r="5" />
          <circle cx="331.300" cy="81" r="5.200" />
          <circle cx="350" cy="67.300" r="5.800" />
          <rect x="345.300" y="76" width="6" height="6" />
          <text x="346.500" y="102.700" textLength="205">inference</text>
        </svg>
        <nav>
          <a class="home">Home</a><a class="about">About Us</a><a>Solutions</a><a class="media">Media Coverage</a><a>Clients</a><a class="active">Contact Us</a>
        </nav>
      </header>
      <city-map></city-map>
      <main class="card">
        <section class="info">
          <h1>Contact Us</h1>
          <p><b>Inference Tech Sdn Bhd (MY):</b><br /><span class="wide">6-33, Plaza Azalea, Persiaran Bandar Raya,</span><br /><span class="normal">Seksyen 14, 40000 Shah Alam, Selangor.</span></p>
          <p class="gap"><b>Inference Tech Pte Ltd (SG):</b><br /><span class="normal">1 Raffles Place, #44-01A, One Raffles Place,</span><br /><span class="wide">Singapore (048616)</span></p>
          <p><b>Email:</b><br /><a class="mail">hello@inference.asia</a></p>
          <p><b>Phone:</b><br /><span class="tight">+60 3 5524 6038</span></p>
        </section>
        <section class="form">
          <h1>Contact Form</h1>
          <div class="fields">
            <div><label>Your Name *</label><input placeholder="Your Name" /></div>
            <div><label>Your Email *</label><input placeholder="Your Email" /></div>
          </div>
          <div class="message">
            <label>Your Message *</label>
            <div class="area">
              <textarea placeholder="Your Message"></textarea>
              <svg class="grip" width="16" height="16" viewBox="0 0 16 16" stroke="#666" stroke-width="1.800">
                <path d="M1.500,14 L14,1.500 M9,15 L15,9" />
              </svg>
            </div>
          </div>
          <button>Send a Message</button>
        </section>
      </main>
      <footer>© 2021 Inference Tech Sdn Bhd, All Rights Reserved</footer>
    `;
  }
}
